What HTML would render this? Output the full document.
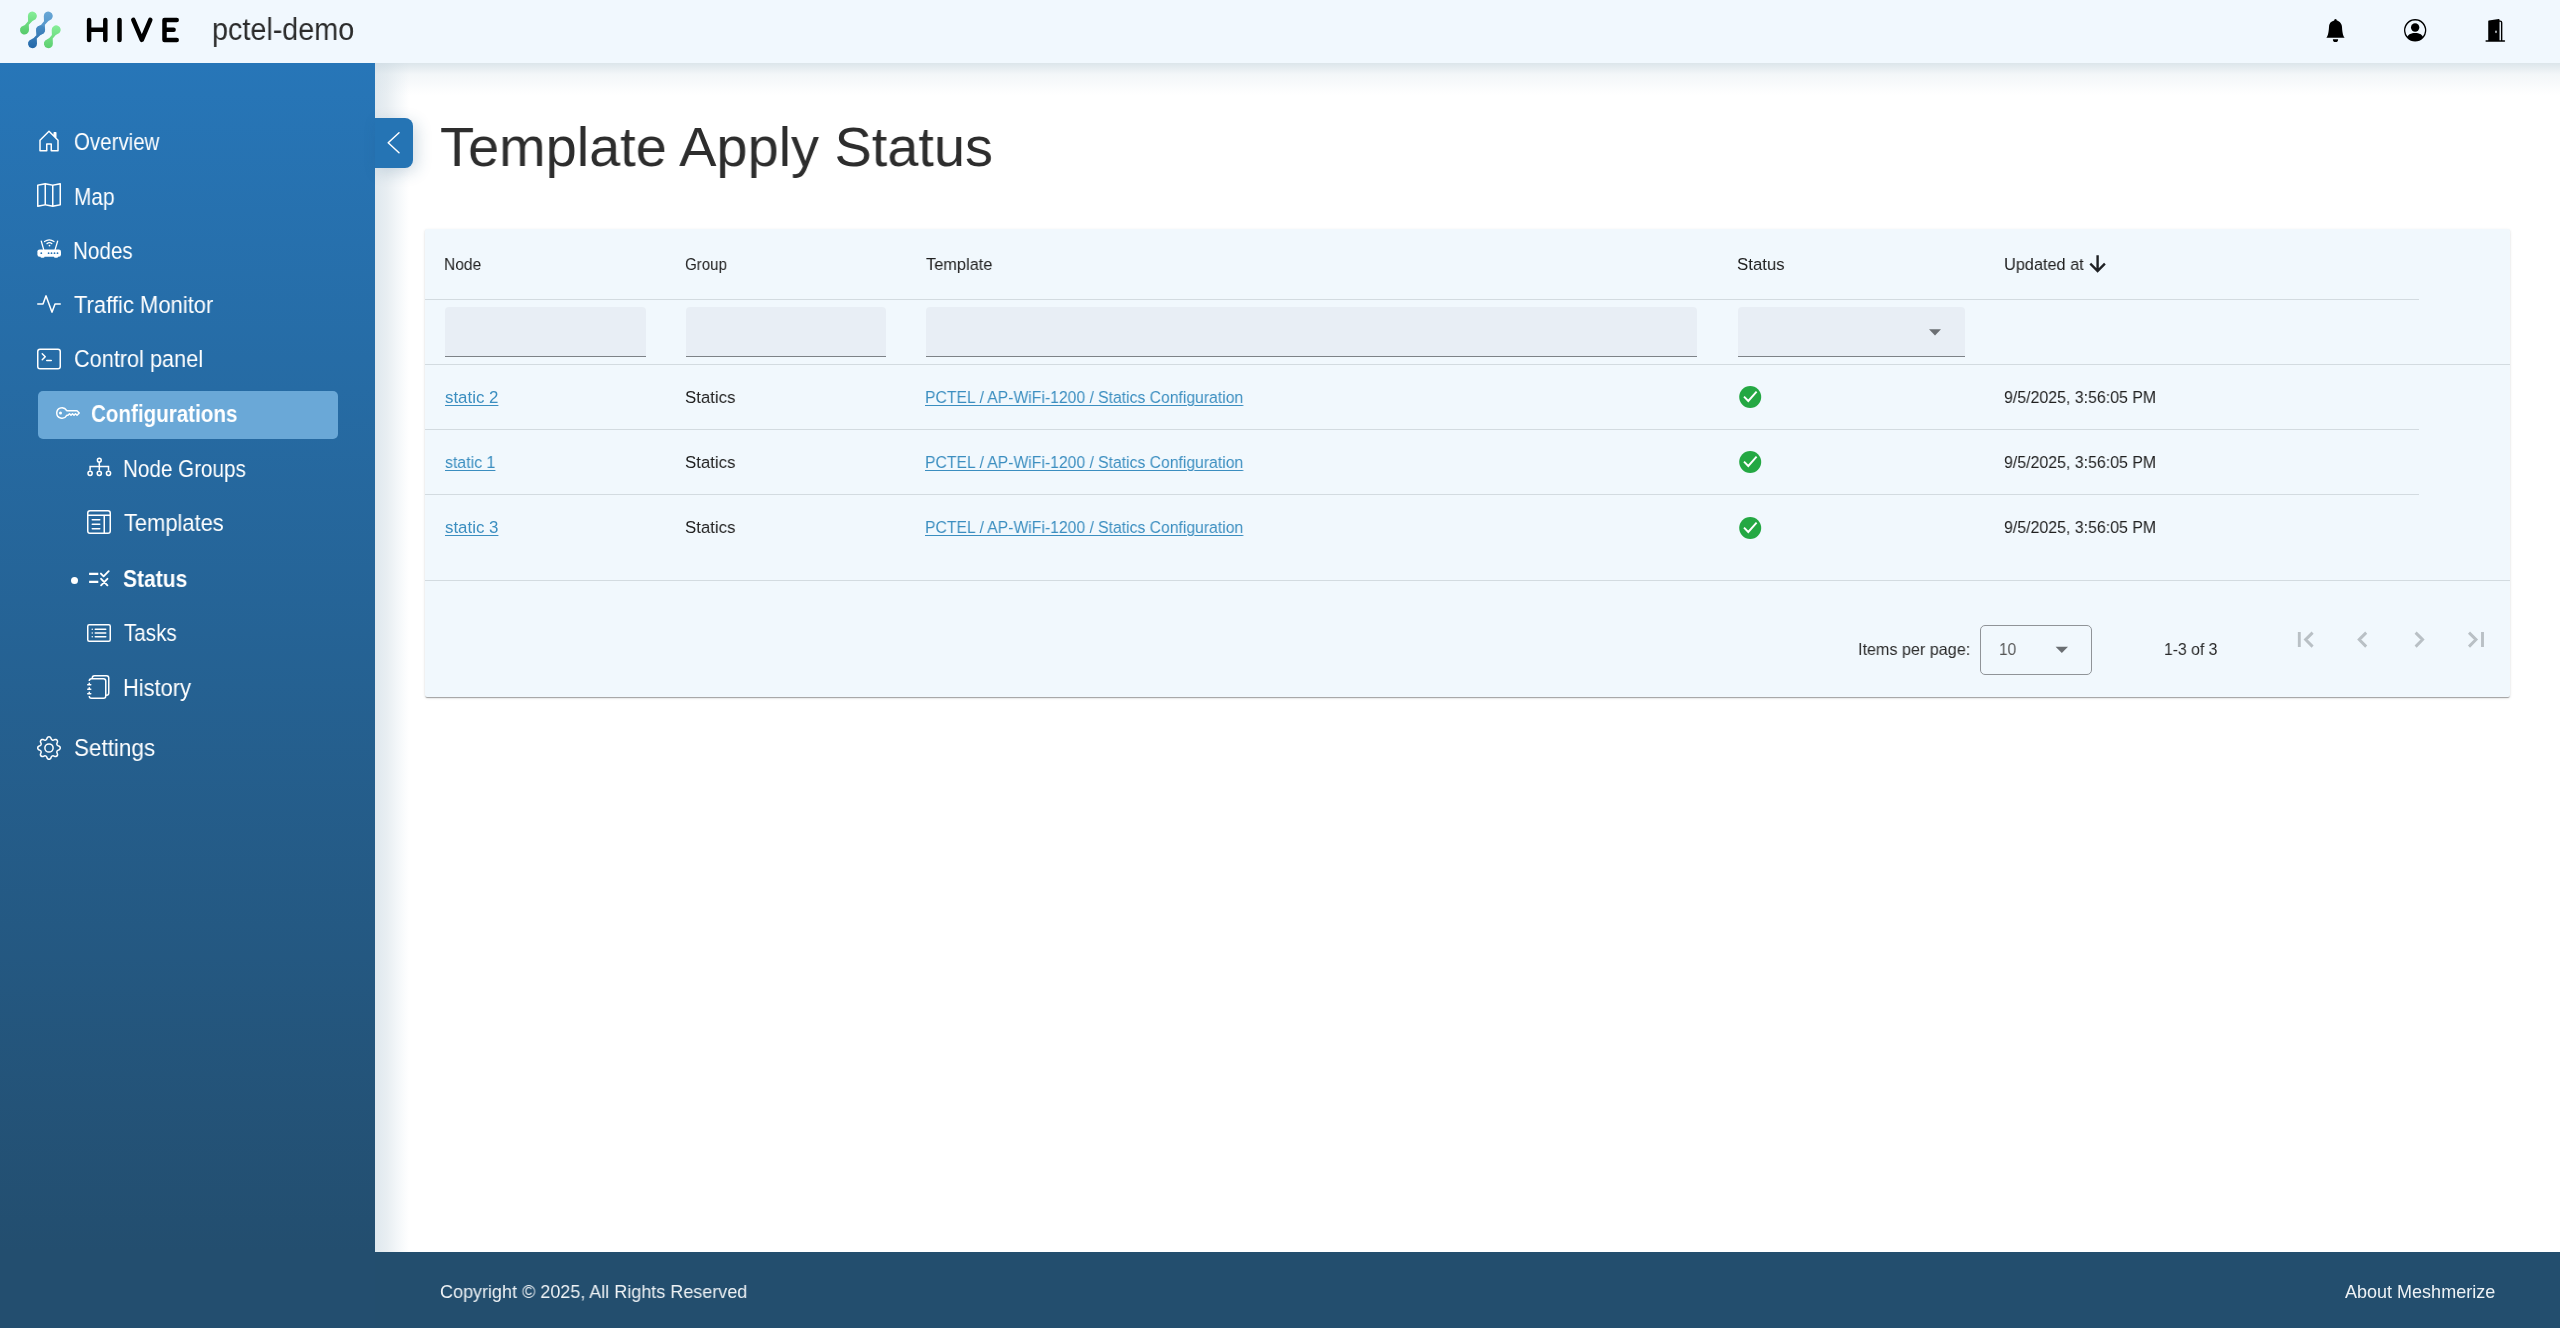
<!DOCTYPE html>
<html><head><meta charset="utf-8"><title>Template Apply Status</title>
<style>
*{margin:0;padding:0;box-sizing:border-box}
html,body{width:2560px;height:1328px;overflow:hidden;background:#fff;font-family:"Liberation Sans",sans-serif}
.ab{position:absolute}
.t{position:absolute;white-space:pre;transform-origin:0 0;will-change:transform}
.ic{position:absolute;overflow:visible}
</style></head><body>
<!-- content shadows -->
<div class="ab" style="left:375px;top:63px;width:34px;height:1189px;background:linear-gradient(90deg,#dfe8ee,#e8eef2 35%,#f5f8fa 70%,rgba(255,255,255,0))"></div>
<div class="ab" style="left:375px;top:63px;width:2185px;height:32px;background:linear-gradient(rgba(205,218,226,0.7),rgba(220,230,236,0.35) 35%,rgba(255,255,255,0))"></div>
<!-- header -->
<div class="ab" style="left:0;top:0;width:2560px;height:63px;background:#f1f8fe"></div>
<!-- sidebar -->
<div class="ab" style="left:0;top:63px;width:375px;height:1265px;background:linear-gradient(#2776b8,#234e6f 94%)"></div>
<!-- toggle -->
<div class="ab" style="left:375px;top:118px;width:37.5px;height:49.5px;background:#2574b4;border-radius:0 8px 8px 0;box-shadow:4px 4px 16px rgba(30,80,120,0.2)"></div>
<!-- highlight -->
<div class="ab" style="left:37.5px;top:391px;width:300px;height:48px;background:#6aa8d7;border-radius:5px"></div>
<!-- footer -->
<div class="ab" style="left:375px;top:1252px;width:2185px;height:76px;background:#234e6e"></div>
<!-- card -->
<div class="ab" style="left:425px;top:229px;width:2085px;height:468px;background:#f1f8fd;border-radius:2px;box-shadow:0 2px 1px -1px rgba(0,0,0,.2),0 1px 1px 0 rgba(0,0,0,.14),0 1px 3px 0 rgba(0,0,0,.12)"></div>
<!-- lines -->
<div class="ab" style="left:425px;top:299px;width:1994px;height:1px;background:#d3dbe0"></div>
<div class="ab" style="left:425px;top:364px;width:2085px;height:1px;background:#d3dbe0"></div>
<div class="ab" style="left:425px;top:429px;width:1994px;height:1px;background:#d3dbe0"></div>
<div class="ab" style="left:425px;top:494px;width:1994px;height:1px;background:#d3dbe0"></div>
<div class="ab" style="left:425px;top:580px;width:2085px;height:1px;background:#d3dbe0"></div>
<!-- filter inputs -->
<div class="ab" style="left:445px;top:307px;width:201px;height:50px;background:#e8eef5;border-radius:4px 4px 0 0;border-bottom:1px solid #7d8287"></div>
<div class="ab" style="left:686px;top:307px;width:200px;height:50px;background:#e8eef5;border-radius:4px 4px 0 0;border-bottom:1px solid #7d8287"></div>
<div class="ab" style="left:926px;top:307px;width:771px;height:50px;background:#e8eef5;border-radius:4px 4px 0 0;border-bottom:1px solid #7d8287"></div>
<div class="ab" style="left:1738px;top:307px;width:227px;height:50px;background:#e8eef5;border-radius:4px 4px 0 0;border-bottom:1px solid #7d8287"></div>
<!-- paginator select -->
<div class="ab" style="left:1980px;top:625px;width:112px;height:49.5px;border:1px solid #909498;border-radius:5px"></div>
<svg class="ic" style="left:0px;top:0px;width:200px;height:62px;" viewBox="0 0 200 62" preserveAspectRatio="none">
<defs>
<linearGradient id="gg" x1="0" y1="0" x2="0" y2="1"><stop offset="0" stop-color="#86ee98"/><stop offset="1" stop-color="#55c96a"/></linearGradient>
<linearGradient id="bg1" x1="0" y1="0" x2="0" y2="1"><stop offset="0" stop-color="#68a7d6"/><stop offset="1" stop-color="#4a8dc4"/></linearGradient>
<linearGradient id="bg2" x1="0" y1="0" x2="0" y2="1"><stop offset="0" stop-color="#4a8dc4"/><stop offset="1" stop-color="#2368a9"/></linearGradient>
<linearGradient id="gg2" x1="0" y1="0" x2="0" y2="1"><stop offset="0" stop-color="#86ee98"/><stop offset="1" stop-color="#5ccf70"/></linearGradient>
</defs>
<g><path d="M27.90 16.10 A4.5 4.5 0 1 1 35.58 19.28 Q31.00 21.00 28.80 24.80 L29.00 30.00 A4.5 4.5 0 1 1 21.32 26.82 Q25.90 25.10 28.10 21.30 Z" fill="url(#gg)"/><path d="M43.80 16.10 A4.5 4.5 0 1 1 51.48 19.28 Q46.90 21.00 44.90 24.80 L45.10 30.00 A4.5 4.5 0 1 1 37.42 26.82 Q42.00 25.10 44.00 21.30 Z" fill="url(#bg1)"/><path d="M36.10 30.00 A4.5 4.5 0 1 1 43.78 33.18 Q39.20 34.90 36.80 38.50 L37.00 43.70 A4.5 4.5 0 1 1 29.32 40.52 Q33.90 38.80 36.30 35.20 Z" fill="url(#bg2)"/><path d="M51.70 29.90 A4.5 4.5 0 1 1 59.38 33.08 Q54.80 34.80 52.70 38.50 L52.90 43.70 A4.5 4.5 0 1 1 45.22 40.52 Q49.80 38.80 51.90 35.10 Z" fill="url(#gg2)"/></g>
<g stroke="#000" stroke-width="4.5" stroke-linecap="round" stroke-linejoin="round" fill="none">
<path d="M89.1 19.9V40M105.3 19.9V40M89.1 29.8H105.3"/>
<path d="M119.5 19.9V40"/>
<path d="M133.3 19.9L141.8 39.8L150.3 19.9"/>
<path d="M164.5 40V19.9H176.7M164.5 29.8H173.6M164.5 40H176.7"/>
</g></svg>
<svg class="ic" style="left:2324.6px;top:18.6px;width:21px;height:23px;" viewBox="0 0 16 16" preserveAspectRatio="none"><path fill="#000" d="M8 16a2 2 0 0 0 2-2H6a2 2 0 0 0 2 2m.995-14.901a1 1 0 1 0-1.99 0A5 5 0 0 0 3 6c0 1.098-.5 6-2 7h14c-1.5-1-2-5.902-2-7 0-2.42-1.72-4.44-4.005-4.901"/></svg>
<svg class="ic" style="left:2404px;top:18.6px;width:22.3px;height:22.5px;" viewBox="0 0 16 16" preserveAspectRatio="none"><path fill="#000" d="M11 6a3 3 0 1 1-6 0 3 3 0 0 1 6 0"/><path fill="#000" fill-rule="evenodd" d="M0 8a8 8 0 1 1 16 0A8 8 0 0 1 0 8m8-7a7 7 0 0 0-5.468 11.37C3.242 11.226 4.805 10 8 10s4.757 1.225 5.468 2.37A7 7 0 0 0 8 1"/></svg>
<svg class="ic" style="left:2483.6px;top:18.7px;width:22.6px;height:22.8px;" viewBox="0 0 16 16" preserveAspectRatio="none"><path fill="#000" d="M1.5 15a.5.5 0 0 0 0 1h13a.5.5 0 0 0 0-1H13V2.5A1.5 1.5 0 0 0 11.5 1H11V.5a.5.5 0 0 0-.57-.495l-7 1A.5.5 0 0 0 3 1.5V15zM11 2h.5a.5.5 0 0 1 .5.5V15h-1zm-2.5 8c-.276 0-.5-.448-.5-1s.224-1 .5-1 .5.448.5 1-.224 1-.5 1"/></svg>
<svg class="ic" style="left:37.3px;top:128.5px;width:24px;height:24px;" viewBox="0 0 16 16" preserveAspectRatio="none"><path fill="#fff" d="M8.354 1.146a.5.5 0 0 0-.708 0l-6 6A.5.5 0 0 0 1.5 7.5v7a.5.5 0 0 0 .5.5h4.5a.5.5 0 0 0 .5-.5v-4h2v4a.5.5 0 0 0 .5.5H14a.5.5 0 0 0 .5-.5v-7a.5.5 0 0 0-.146-.354L13 5.793V2.5a.5.5 0 0 0-.5-.5h-1a.5.5 0 0 0-.5.5v1.293zM2.5 14V7.707l5.5-5.5 5.5 5.5V14H10v-4a.5.5 0 0 0-.5-.5h-3a.5.5 0 0 0-.5.5v4z"/></svg>
<svg class="ic" style="left:37.3px;top:183px;width:24px;height:24px;" viewBox="0 0 16 16" preserveAspectRatio="none"><path fill="#fff" fill-rule="evenodd" d="M15.817.113A.5.5 0 0 1 16 .5v14a.5.5 0 0 1-.402.49l-5 1a.5.5 0 0 1-.196 0L5.5 15.01l-4.902.98A.5.5 0 0 1 0 15.5v-14a.5.5 0 0 1 .402-.49l5-1a.5.5 0 0 1 .196 0L10.5.99l4.902-.98a.5.5 0 0 1 .415.103M10 1.91l-4-.8v12.98l4 .8zm1 12.98 4-.8V1.11l-4 .8zm-6-.8V1.11l-4 .8v12.98z"/></svg>
<svg class="ic" style="left:34px;top:234px;width:30px;height:28px;" viewBox="34 234 30 28" preserveAspectRatio="none">
<rect x="37.4" y="249.4" width="23.6" height="7.4" rx="2.2" fill="#fff"/>
<rect x="40.5" y="255" width="4" height="2.8" rx="1" fill="#fff"/><rect x="54" y="255" width="4" height="2.8" rx="1" fill="#fff"/>
<g fill="#2773b5"><circle cx="41.3" cy="253.2" r="0.9"/><circle cx="48.6" cy="253.2" r="0.9"/><circle cx="51.5" cy="253.2" r="0.9"/><circle cx="54.5" cy="253.2" r="0.9"/><circle cx="57.5" cy="253.2" r="0.9"/></g>
<path d="M41.3 241.2 L43.7 249.6 M57.6 241.2 L55.1 249.6" stroke="#fff" stroke-width="1.3" stroke-linecap="round"/>
<circle cx="49.5" cy="245.6" r="0.9" fill="#fff"/>
<path d="M46.9 243.7 Q49.5 241.6 51.9 243.7 M44.5 241.6 Q49.3 238 54 241.6" stroke="#fff" stroke-width="1.2" fill="none" stroke-linecap="round"/>
</svg>
<svg class="ic" style="left:37.3px;top:292px;width:24px;height:24px;" viewBox="0 0 16 16" preserveAspectRatio="none"><path fill="#fff" d="M6 2a.5.5 0 0 1 .47.33L10 12.036l1.53-4.208A.5.5 0 0 1 12 7.5h3.5a.5.5 0 0 1 0 1h-3.15l-1.88 5.17a.5.5 0 0 1-.94 0L6 3.964 4.47 8.171A.5.5 0 0 1 4 8.5H.5a.5.5 0 0 1 0-1h3.15l1.88-5.17A.5.5 0 0 1 6 2"/></svg>
<svg class="ic" style="left:37.3px;top:346.5px;width:24px;height:24px;" viewBox="0 0 16 16" preserveAspectRatio="none"><path fill="#fff" d="M6 9a.5.5 0 0 1 .5-.5h3a.5.5 0 0 1 0 1h-3A.5.5 0 0 1 6 9M3.854 4.146a.5.5 0 1 0-.708.708L4.793 6.5 3.146 8.146a.5.5 0 1 0 .708.708l2-2a.5.5 0 0 0 0-.708z"/><path fill="#fff" d="M2 1a2 2 0 0 0-2 2v10a2 2 0 0 0 2 2h12a2 2 0 0 0 2-2V3a2 2 0 0 0-2-2zm12 1a1 1 0 0 1 1 1v10a1 1 0 0 1-1 1H2a1 1 0 0 1-1-1V3a1 1 0 0 1 1-1z"/></svg>
<svg class="ic" style="left:56px;top:400.6px;width:24px;height:24px;" viewBox="0 0 16 16" preserveAspectRatio="none"><path fill="#fff" d="M0 8a4 4 0 0 1 7.465-2H14a.5.5 0 0 1 .354.146l1.5 1.5a.5.5 0 0 1 0 .708l-1.5 1.5a.5.5 0 0 1-.708 0L13 9.207l-.646.647a.5.5 0 0 1-.708 0L11 9.207l-.646.647a.5.5 0 0 1-.708 0L9 9.207l-.646.647A.5.5 0 0 1 8 10h-.535A4 4 0 0 1 0 8m4-3a3 3 0 1 0 2.712 4.285A.5.5 0 0 1 7.163 9h.63l.853-.854a.5.5 0 0 1 .708 0l.646.647.646-.647a.5.5 0 0 1 .708 0l.646.647.646-.647a.5.5 0 0 1 .708 0l.646.647.793-.793-1-1h-6.63a.5.5 0 0 1-.451-.285A3 3 0 0 0 4 5"/><path fill="#fff" d="M4 8a1 1 0 1 1-2 0 1 1 0 0 1 2 0"/></svg>
<svg class="ic" style="left:84px;top:454px;width:30px;height:26px;" viewBox="84 454 30 26" preserveAspectRatio="none">
<g stroke="#fff" stroke-width="1.5" fill="none">
<circle cx="99.3" cy="460.2" r="1.9"/>
<path d="M99.3 462.1V466.5M90.1 470.6V466.5H108.5V470.6M99.3 466.5V470.6"/>
<circle cx="90.1" cy="473.3" r="2.1"/><circle cx="99.3" cy="473.3" r="2.1"/><circle cx="108.5" cy="473.3" r="2.1"/>
</g></svg>
<svg class="ic" style="left:87.3px;top:509.5px;width:24px;height:24px;" viewBox="0 0 16 16" preserveAspectRatio="none"><path fill="#fff" d="M3 6.5a.5.5 0 0 1 .5-.5h5a.5.5 0 0 1 0 1h-5a.5.5 0 0 1-.5-.5m0 3a.5.5 0 0 1 .5-.5h5a.5.5 0 0 1 0 1h-5a.5.5 0 0 1-.5-.5m.5 2.5a.5.5 0 0 0 0 1h5a.5.5 0 0 0 0-1z"/><path fill="#fff" d="M2 0a2 2 0 0 0-2 2v12a2 2 0 0 0 2 2h12a2 2 0 0 0 2-2V2a2 2 0 0 0-2-2zm12 1a1 1 0 0 1 1 1v1H1V2a1 1 0 0 1 1-1zm1 3v10a1 1 0 0 1-1 1h-2V4zm-4 0v11H2a1 1 0 0 1-1-1V4z"/></svg>
<svg class="ic" style="left:84px;top:564px;width:32px;height:28px;" viewBox="84 564 32 28" preserveAspectRatio="none">
<g stroke="#fff" stroke-width="2.1" fill="none" stroke-linejoin="round">
<path d="M89.1 573.9H98.3M89.1 581.9H98.3"/>
<path d="M100.9 573.6L103.6 576.3L108.7 571.2" stroke-linecap="round" stroke-width="1.9"/>
<path d="M101.1 578.8L107.4 585.3M107.4 578.8L101.1 585.3" stroke-linecap="round" stroke-width="1.9"/>
</g></svg>
<svg class="ic" style="left:87.3px;top:620.5px;width:24px;height:24px;" viewBox="0 0 16 16" preserveAspectRatio="none"><path fill="#fff" d="M14.5 3a.5.5 0 0 1 .5.5v9a.5.5 0 0 1-.5.5h-13a.5.5 0 0 1-.5-.5v-9a.5.5 0 0 1 .5-.5zm-13-1A1.5 1.5 0 0 0 0 3.5v9A1.5 1.5 0 0 0 1.5 14h13a1.5 1.5 0 0 0 1.5-1.5v-9A1.5 1.5 0 0 0 14.5 2z"/><path fill="#fff" d="M5 8a.5.5 0 0 1 .5-.5h7a.5.5 0 0 1 0 1h-7A.5.5 0 0 1 5 8m0-2.5a.5.5 0 0 1 .5-.5h7a.5.5 0 0 1 0 1h-7a.5.5 0 0 1-.5-.5m0 5a.5.5 0 0 1 .5-.5h7a.5.5 0 0 1 0 1h-7a.5.5 0 0 1-.5-.5m-1-5a.5.5 0 1 1-1 0 .5.5 0 0 1 1 0M4 8a.5.5 0 1 1-1 0 .5.5 0 0 1 1 0m0 2.5a.5.5 0 1 1-1 0 .5.5 0 0 1 1 0"/></svg>
<svg class="ic" style="left:87.1px;top:675px;width:24px;height:24px;" viewBox="0 0 16 16" preserveAspectRatio="none"><path fill="#fff" d="M5 0h8a2 2 0 0 1 2 2v10a2 2 0 0 1-2 2 2 2 0 0 1-2 2H3a2 2 0 0 1-2-2h1a1 1 0 0 0 1 1h8a1 1 0 0 0 1-1V4a1 1 0 0 0-1-1H3a1 1 0 0 0-1 1H1a2 2 0 0 1 2-2h8a2 2 0 0 1 2 2v9a1 1 0 0 0 1-1V2a1 1 0 0 0-1-1H5a1 1 0 0 0-1 1H3a2 2 0 0 1 2-2"/><path fill="#fff" d="M1 6v-.5a.5.5 0 0 1 1 0V6h.5a.5.5 0 0 1 0 1h-2a.5.5 0 0 1 0-1zm0 3v-.5a.5.5 0 0 1 1 0V9h.5a.5.5 0 0 1 0 1h-2a.5.5 0 0 1 0-1zm0 2.5v.5H.5a.5.5 0 0 0 0 1h2a.5.5 0 0 0 0-1H2v-.5a.5.5 0 0 0-1 0"/></svg>
<svg class="ic" style="left:37.3px;top:735.5px;width:24px;height:24px;" viewBox="0 0 16 16" preserveAspectRatio="none"><path fill="#fff" d="M8 4.754a3.246 3.246 0 1 0 0 6.492 3.246 3.246 0 0 0 0-6.492M5.754 8a2.246 2.246 0 1 1 4.492 0 2.246 2.246 0 0 1-4.492 0"/><path fill="#fff" d="M9.796 1.343c-.527-1.79-3.065-1.79-3.592 0l-.094.319a.873.873 0 0 1-1.255.52l-.292-.16c-1.64-.892-3.433.902-2.54 2.541l.159.292a.873.873 0 0 1-.52 1.255l-.319.094c-1.79.527-1.79 3.065 0 3.592l.319.094a.873.873 0 0 1 .52 1.255l-.16.292c-.892 1.64.901 3.434 2.541 2.54l.292-.159a.873.873 0 0 1 1.255.52l.094.319c.527 1.79 3.065 1.79 3.592 0l.094-.319a.873.873 0 0 1 1.255-.52l.292.16c1.64.893 3.434-.902 2.54-2.541l-.159-.292a.873.873 0 0 1 .52-1.255l.319-.094c1.79-.527 1.790-3.065 0-3.592l-.319-.094a.873.873 0 0 1-.52-1.255l.16-.292c.893-1.64-.902-3.433-2.541-2.54l-.292.159a.873.873 0 0 1-1.255-.52zm-2.633.283c.246-.835 1.428-.835 1.674 0l.094.319a1.873 1.873 0 0 0 2.693 1.115l.291-.16c.764-.415 1.6.42 1.184 1.185l-.159.292a1.873 1.873 0 0 0 1.116 2.692l.318.094c.835.246.835 1.428 0 1.674l-.319.094a1.873 1.873 0 0 0-1.115 2.693l.16.291c.415.764-.42 1.6-1.185 1.184l-.291-.159a1.873 1.873 0 0 0-2.693 1.116l-.094.318c-.246.835-1.428.835-1.674 0l-.094-.319a1.873 1.873 0 0 0-2.692-1.115l-.292.16c-.764.415-1.6-.42-1.184-1.185l.159-.291A1.873 1.873 0 0 0 1.945 8.93l-.319-.094c-.835-.246-.835-1.428 0-1.674l.319-.094A1.873 1.873 0 0 0 3.06 4.377l-.16-.292c-.415-.764.42-1.6 1.185-1.184l.292.159a1.873 1.873 0 0 0 2.692-1.115z"/></svg>
<div class="ab" style="left:70.6px;top:577.2px;width:7px;height:7px;border-radius:50%;background:#fff"></div>
<svg class="ic" style="left:380px;top:125px;width:30px;height:36px;" viewBox="380 125 30 36" preserveAspectRatio="none"><path d="M399 132.8L388.2 142.8L399 152.8" stroke="#fff" stroke-width="1.5" fill="none" stroke-linecap="round" stroke-linejoin="round"/></svg>
<svg class="ic" style="left:2085px;top:250px;width:26px;height:26px;" viewBox="2085 250 26 26" preserveAspectRatio="none"><path d="M2097.6 255.2V270.5M2090.3 263.6L2097.6 271L2104.9 263.6" stroke="#1f2124" stroke-width="2.4" fill="none"/></svg>
<svg class="ic" style="left:1925px;top:325px;width:20px;height:15px;" viewBox="1925 325 20 15" preserveAspectRatio="none"><path d="M1929 329.2H1941L1935 335.4Z" fill="#6b6f73"/></svg>
<svg class="ic" style="left:2050px;top:640px;width:24px;height:18px;" viewBox="2050 640 24 18" preserveAspectRatio="none"><path d="M2055.6 646.8H2068L2061.8 653Z" fill="#6b6f73"/></svg>
<svg class="ic" style="left:2290px;top:625px;width:200px;height:30px;" viewBox="2290 625 200 30" preserveAspectRatio="none"><g stroke="#b9c0c5" stroke-width="2.9" fill="none">
<path d="M2299.3 632V647M2312.6 632.6L2305.6 639.6L2312.6 646.6M2366.2 632.6L2359.2 639.6L2366.2 646.6M2415.6 632.6L2422.6 639.6L2415.6 646.6M2469 632.6L2476 639.6L2469 646.6M2482.5 632V647"/></g></svg>
<svg class="ic" style="left:1736px;top:383.0px;width:28px;height:28px;" viewBox="1736 383.0 28 28" preserveAspectRatio="none"><circle cx="1750.2" cy="397.0" r="11" fill="#24a843"/><path d="M1744 396.6L1748.3 401.0L1756.6 391.7" stroke="#fff" stroke-width="1.9" fill="none"/></svg>
<svg class="ic" style="left:1736px;top:448.0px;width:28px;height:28px;" viewBox="1736 448.0 28 28" preserveAspectRatio="none"><circle cx="1750.2" cy="462.0" r="11" fill="#24a843"/><path d="M1744 461.6L1748.3 466.0L1756.6 456.7" stroke="#fff" stroke-width="1.9" fill="none"/></svg>
<svg class="ic" style="left:1736px;top:513.5px;width:28px;height:28px;" viewBox="1736 513.5 28 28" preserveAspectRatio="none"><circle cx="1750.2" cy="527.5" r="11" fill="#24a843"/><path d="M1744 527.1L1748.3 531.5L1756.6 522.2" stroke="#fff" stroke-width="1.9" fill="none"/></svg>
<div class="t" style="left:211.69px;top:13.51px;font-size:31.44px;line-height:31.44px;font-weight:400;color:#2b2b2b;transform:scaleX(0.9147);">pctel-demo</div>
<div class="t" style="left:73.78px;top:131.30px;font-size:23.26px;line-height:23.26px;font-weight:400;color:#fff;transform:scaleX(0.8809);">Overview</div>
<div class="t" style="left:73.63px;top:185.70px;font-size:23.26px;line-height:23.26px;font-weight:400;color:#fff;transform:scaleX(0.8978);">Map</div>
<div class="t" style="left:73.15px;top:239.91px;font-size:23.26px;line-height:23.26px;font-weight:400;color:#fff;transform:scaleX(0.8879);">Nodes</div>
<div class="t" style="left:73.76px;top:294.11px;font-size:23.26px;line-height:23.26px;font-weight:400;color:#fff;transform:scaleX(0.9460);">Traffic Monitor</div>
<div class="t" style="left:73.72px;top:348.30px;font-size:23.26px;line-height:23.26px;font-weight:400;color:#fff;transform:scaleX(0.9330);">Control panel</div>
<div class="t" style="left:91.28px;top:403.10px;font-size:23.69px;line-height:23.69px;font-weight:700;color:#fff;transform:scaleX(0.8694);">Configurations</div>
<div class="t" style="left:122.95px;top:457.50px;font-size:23.26px;line-height:23.26px;font-weight:400;color:#fff;transform:scaleX(0.8880);">Node Groups</div>
<div class="t" style="left:123.56px;top:512.00px;font-size:23.26px;line-height:23.26px;font-weight:400;color:#fff;transform:scaleX(0.9412);">Templates</div>
<div class="t" style="left:123.27px;top:567.80px;font-size:23.26px;line-height:23.26px;font-weight:700;color:#fff;transform:scaleX(0.9033);">Status</div>
<div class="t" style="left:123.99px;top:622.11px;font-size:23.26px;line-height:23.26px;font-weight:400;color:#fff;transform:scaleX(0.8875);">Tasks</div>
<div class="t" style="left:122.65px;top:676.80px;font-size:23.26px;line-height:23.26px;font-weight:400;color:#fff;transform:scaleX(0.9395);">History</div>
<div class="t" style="left:73.58px;top:737.20px;font-size:23.26px;line-height:23.26px;font-weight:400;color:#fff;transform:scaleX(0.9648);">Settings</div>
<div class="t" style="left:440.13px;top:119.26px;font-size:56.32px;line-height:56.32px;font-weight:400;color:#2d2d2d;transform:scaleX(0.9924);">Template Apply Status</div>
<div class="t" style="left:444.36px;top:256.76px;font-size:16.86px;line-height:16.86px;font-weight:400;color:#212121;transform:scaleX(0.9223);">Node</div>
<div class="t" style="left:684.85px;top:256.76px;font-size:16.86px;line-height:16.86px;font-weight:400;color:#212121;transform:scaleX(0.8952);">Group</div>
<div class="t" style="left:925.57px;top:256.76px;font-size:16.86px;line-height:16.86px;font-weight:400;color:#212121;transform:scaleX(0.9714);">Template</div>
<div class="t" style="left:1736.96px;top:256.76px;font-size:16.86px;line-height:16.86px;font-weight:400;color:#212121;transform:scaleX(0.9964);">Status</div>
<div class="t" style="left:2004.30px;top:256.76px;font-size:16.86px;line-height:16.86px;font-weight:400;color:#212121;transform:scaleX(0.9667);">Updated at</div>
<div class="t" style="left:1858.05px;top:641.81px;font-size:16.72px;line-height:16.72px;font-weight:400;color:#2b2b2b;transform:scaleX(0.9668);">Items per page:</div>
<div class="t" style="left:1998.76px;top:641.81px;font-size:16.72px;line-height:16.72px;font-weight:400;color:#555;transform:scaleX(0.9246);">10</div>
<div class="t" style="left:2163.74px;top:641.81px;font-size:16.72px;line-height:16.72px;font-weight:400;color:#2b2b2b;transform:scaleX(0.9440);">1-3 of 3</div>
<div class="t" style="left:440.10px;top:1283.00px;font-size:18.31px;line-height:18.31px;font-weight:400;color:#eef2f5;transform:scaleX(0.9832);">Copyright © 2025, All Rights Reserved</div>
<div class="t" style="left:2344.90px;top:1284.10px;font-size:17.88px;line-height:17.88px;font-weight:400;color:#eef2f5;transform:scaleX(1.0087);">About Meshmerize</div>
<div class="t" style="left:444.69px;top:389.51px;font-size:16.86px;line-height:16.86px;font-weight:400;color:#3b8ec0;transform:scaleX(1.0000);text-decoration:underline;text-underline-offset:1.5px;text-decoration-thickness:1px;">static 2</div>
<div class="t" style="left:684.66px;top:389.51px;font-size:16.86px;line-height:16.86px;font-weight:400;color:#212121;transform:scaleX(0.9946);">Statics</div>
<div class="t" style="left:924.74px;top:389.51px;font-size:16.86px;line-height:16.86px;font-weight:400;color:#3b8ec0;transform:scaleX(0.9319);text-decoration:underline;text-underline-offset:1.5px;text-decoration-thickness:1px;">PCTEL / AP-WiFi-1200 / Statics Configuration</div>
<div class="t" style="left:2004.20px;top:388.51px;font-size:17.08px;line-height:17.08px;font-weight:400;color:#212121;transform:scaleX(0.9314);">9/5/2025, 3:56:05 PM</div>
<div class="t" style="left:444.72px;top:454.51px;font-size:16.86px;line-height:16.86px;font-weight:400;color:#3b8ec0;transform:scaleX(0.9424);text-decoration:underline;text-underline-offset:1.5px;text-decoration-thickness:1px;">static 1</div>
<div class="t" style="left:684.66px;top:454.51px;font-size:16.86px;line-height:16.86px;font-weight:400;color:#212121;transform:scaleX(0.9946);">Statics</div>
<div class="t" style="left:924.74px;top:454.51px;font-size:16.86px;line-height:16.86px;font-weight:400;color:#3b8ec0;transform:scaleX(0.9319);text-decoration:underline;text-underline-offset:1.5px;text-decoration-thickness:1px;">PCTEL / AP-WiFi-1200 / Statics Configuration</div>
<div class="t" style="left:2004.20px;top:453.51px;font-size:17.08px;line-height:17.08px;font-weight:400;color:#212121;transform:scaleX(0.9314);">9/5/2025, 3:56:05 PM</div>
<div class="t" style="left:444.69px;top:519.51px;font-size:16.86px;line-height:16.86px;font-weight:400;color:#3b8ec0;transform:scaleX(1.0000);text-decoration:underline;text-underline-offset:1.5px;text-decoration-thickness:1px;">static 3</div>
<div class="t" style="left:684.66px;top:519.51px;font-size:16.86px;line-height:16.86px;font-weight:400;color:#212121;transform:scaleX(0.9946);">Statics</div>
<div class="t" style="left:924.74px;top:519.51px;font-size:16.86px;line-height:16.86px;font-weight:400;color:#3b8ec0;transform:scaleX(0.9319);text-decoration:underline;text-underline-offset:1.5px;text-decoration-thickness:1px;">PCTEL / AP-WiFi-1200 / Statics Configuration</div>
<div class="t" style="left:2004.20px;top:518.51px;font-size:17.08px;line-height:17.08px;font-weight:400;color:#212121;transform:scaleX(0.9314);">9/5/2025, 3:56:05 PM</div>
<script>(function(){var w=window.innerWidth;if(w&&Math.abs(w-2560)>2){document.documentElement.style.zoom=w/2560;}})();</script>
</body></html>
